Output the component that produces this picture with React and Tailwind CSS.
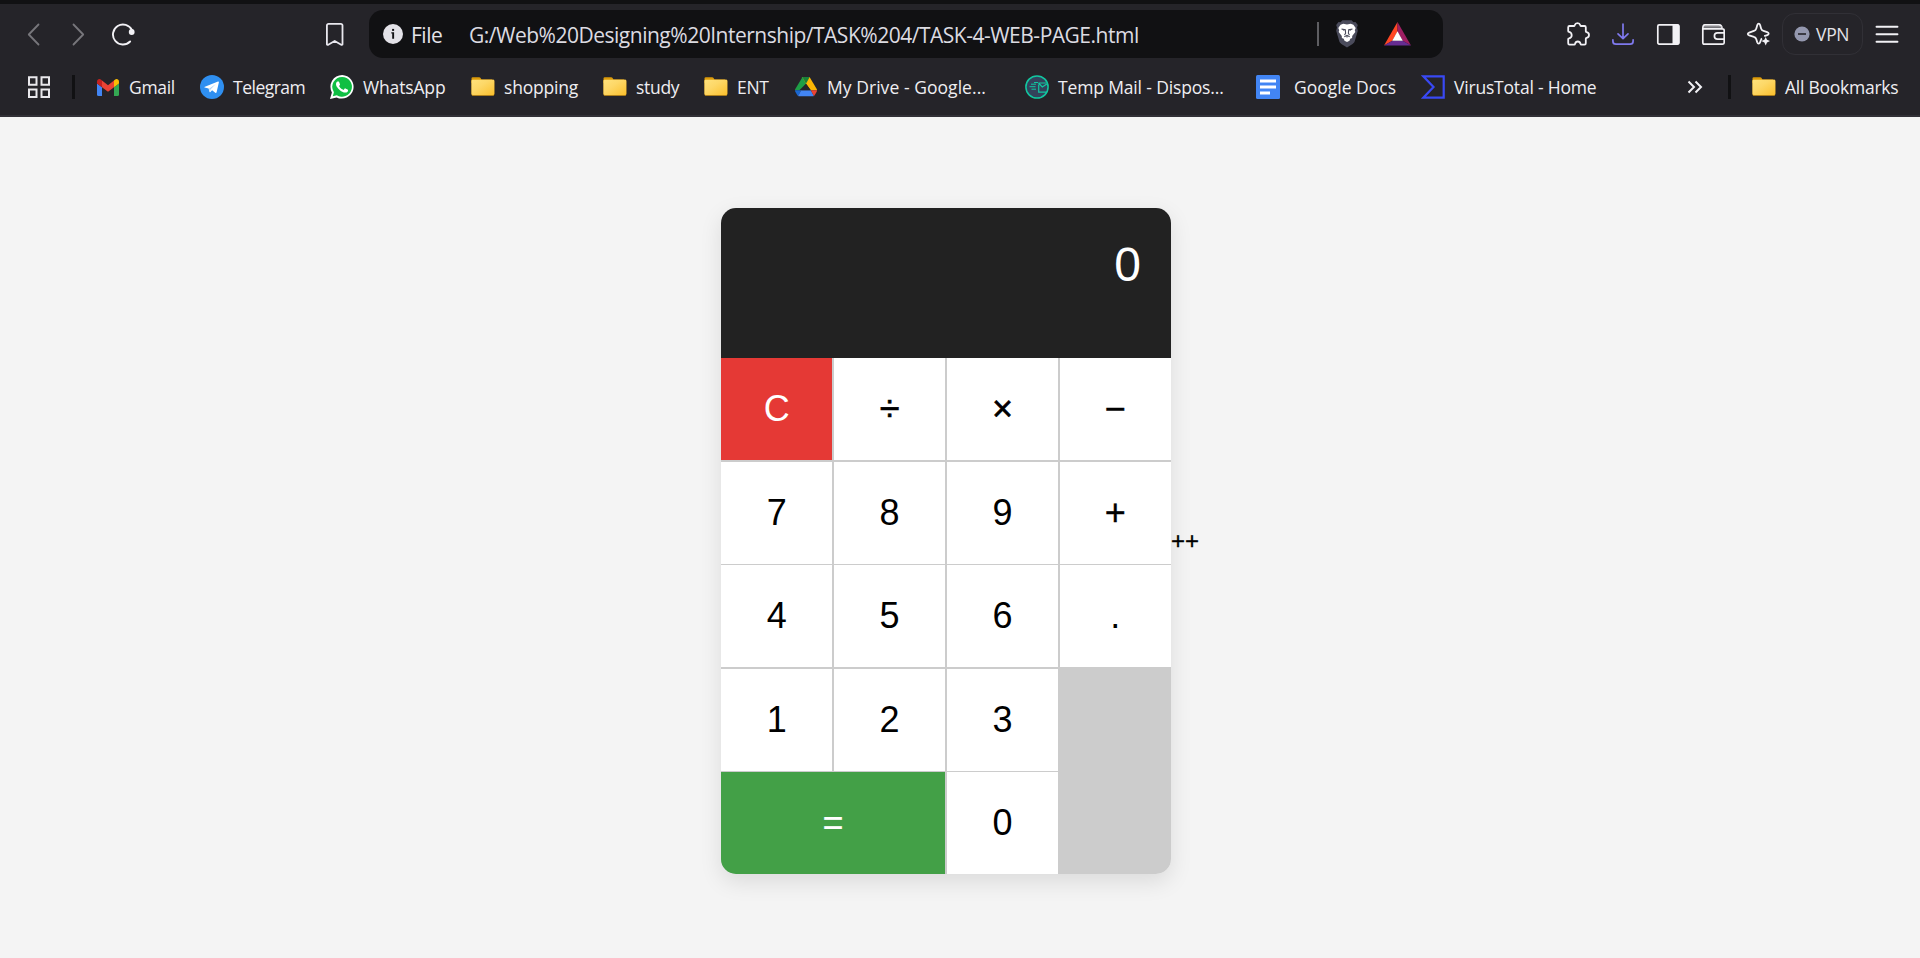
import React from "react";

const uiFont = "font-['Open_Sans','Noto_Sans',sans-serif]";

function Back() {
  return (
    <svg className="h-6 w-6" viewBox="0 0 24 24" fill="none" stroke="#77767b" strokeWidth="1.8" strokeLinecap="round" strokeLinejoin="round">
      <path d="M16.5 2.5 6.8 12.5l9.7 10" />
    </svg>
  );
}
function Forward() {
  return (
    <svg className="h-6 w-6" viewBox="0 0 24 24" fill="none" stroke="#77767b" strokeWidth="1.8" strokeLinecap="round" strokeLinejoin="round">
      <path d="M6.500 2.500 16.200 12.500l-9.700 10" />
    </svg>
  );
}
function Reload() {
  return (
    <svg className="h-6 w-6" viewBox="0 0 24 24" fill="none" stroke="#f2f1f5" strokeWidth="1.9" strokeLinecap="round">
      <path d="M18.100 19.500A10 10 0 1 1 20 8.200" />
      <circle cx="19.700" cy="10" r="2.900" fill="#f2f1f5" stroke="none" />
    </svg>
  );
}
function BookmarkIcon() {
  return (
    <svg className="h-6 w-6" viewBox="0 0 24 24" fill="none" stroke="#e9e8ee" strokeWidth="1.8" strokeLinejoin="round">
      <path d="M4.500 1.900h12.400a1.600 1.600 0 0 1 1.600 1.600v18.600a.8.8 0 0 1-1.300.6L10.700 19l-6.500 3.700a.8.8 0 0 1-1.300-.6V3.500a1.600 1.600 0 0 1 1.600-1.600z" />
    </svg>
  );
}
function Info() {
  return (
    <svg className="h-5 w-5" viewBox="0 0 20 20">
      <circle cx="10" cy="10" r="10" fill="#e3e2e8" />
      <rect x="9.1" y="4.9" width="2" height="2" fill="#111113" />
      <path d="M8.3 8.2h2.8v6.6H9.2V9.6h-.9z" fill="#111113" />
    </svg>
  );
}
function Shield() {
  return (
    <svg className="h-7 w-6" viewBox="0 0 24 28">
      <path d="M7.5.3h9l2 2 2-.2 2.3 3-.8 2.4.8 3.2-3 10.4c-.4 1.4-1.2 2.2-2.2 2.9L12 27.6 6.4 24c-1-.7-1.8-1.5-2.2-2.9l-3-10.4L2 7.500 1.200 5.100l2.300-3 2 .2z" fill="#4a4b5b" />
      <path d="M8.300 3.700 12 4.500l3.700-.8 2.700 1 2.300 3.300-.9 2.300.5 1.800-3.100 4-.1 2-1.800.7-.8 2L12 22.100l-2.500-1.300-.8-2-1.800-.7-.1-2-3.100-4 .5-1.800-.9-2.300 2.300-3.300z" fill="#fff" />
      <path d="m6.500 9 3.800.7.300 3.600-1.100 1.700M17.500 9l-3.800.7-.3 3.600 1.100 1.700M9.300 16.800l2.700-1.500 2.700 1.500M12 15.500v2" fill="none" stroke="#4a4b5b" strokeWidth="1.100" />
      <path d="m6.700 9.200 3 .4-.6 1.300zM17.300 9.200l-3 .4.600 1.300z" fill="#4a4b5b" />
    </svg>
  );
}
function Bat() {
  return (
    <svg className="h-6 w-[27px]" viewBox="0 0 27 24">
      <path d="M13.500 0v9.500L8.300 18.800 0 23.600z" fill="#ff4724" />
      <path d="M13.500 0 27 23.600l-8.300-4.800L13.500 9.500z" fill="#9e1f63" />
      <path d="M0 23.600h27l-8.300-4.900H8.300z" fill="#662d91" />
      <path d="m13.500 9.300 5.300 9.500H8.200z" fill="#fff" />
    </svg>
  );
}
function PuzzleIcon() {
  return (
    <svg className="h-6 w-6" viewBox="0 0 24 24" fill="none" stroke="#f2f1f5" strokeWidth="1.800" strokeLinejoin="round">
      <path d="M3.500 4h4.300c.5 0 .8-.3.900-.8C9.100 1.900 10.100 1.200 11.500 1.200s2.400.7 2.800 2c.1.500.4.800.9.800h3.300c.8 0 1.300.5 1.300 1.300v4c0 .5.300.8.800.9 1.500.3 2.400 1.400 2.400 2.800s-.9 2.500-2.400 2.800c-.5.100-.8.400-.8.900v4.600c0 .8-.5 1.300-1.300 1.300h-3.100c-.5 0-.8-.3-.9-.8-.3-1.400-1.300-2.300-2.700-2.300s-2.400.9-2.700 2.300c-.1.500-.4.800-.9.800H3.500c-.8 0-1.300-.5-1.300-1.300v-4c0-.5.300-.8.800-.9 1.700-.4 2.700-1.500 2.700-3.100S4.700 10.300 3 9.900c-.5-.1-.8-.4-.8-.9V5.300C2.200 4.500 2.700 4 3.500 4z" />
    </svg>
  );
}
function DownloadIcon() {
  return (
    <svg className="h-6 w-6" viewBox="0 0 24 24" fill="none" stroke="#7f79ee" strokeWidth="1.700" strokeLinecap="round" strokeLinejoin="round">
      <path d="M12 2v14.500M7 11.800l5 4.900 5-4.900M1.900 17.800v1.400c0 2 1 3 3 3h14.200c2 0 3-1 3-3v-1.400" />
    </svg>
  );
}
function Panel() {
  return (
    <svg className="h-6 w-6" viewBox="0 0 24 24">
      <rect x="1.800" y="2.900" width="21" height="19.200" rx="1.300" fill="none" stroke="#f2f1f5" strokeWidth="1.700" />
      <path d="M16.500 2.500h5.500a1.500 1.500 0 0 1 1.500 1.500v17a1.500 1.500 0 0 1-1.500 1.500h-5.500z" fill="#f2f1f5" />
    </svg>
  );
}
function WalletIcon() {
  return (
    <svg className="h-6 w-6" viewBox="0 0 24 24" fill="none" stroke="#f2f1f5" strokeWidth="1.700" strokeLinejoin="round">
      <path d="M1.800 6.800v13.600c0 1 .7 1.700 1.700 1.700h18c1 0 1.700-.7 1.700-1.700V8.500c0-1-.7-1.700-1.700-1.700H1.800c0 0 0-3.900 1.900-3.900h14.600c1.600 0 2.600 1.500 2.700 3.700" />
      <path d="M3 4.900h17.500" strokeWidth="1.400" stroke="#a9a8ad" />
      <path d="M23 10.800h-6.500c-1.900 0-3.100 1.300-3.100 3.200s1.200 3.200 3.100 3.200H23" />
    </svg>
  );
}
function Spark() {
  return (
    <svg className="h-6 w-6" viewBox="0 0 24 24" fill="none" stroke="#f2f1f5" strokeWidth="1.800" strokeLinejoin="round">
      <path d="M16 16.500c-.5.300-.9.800-1.100 1.500l-.8 2.300c-.6 1.800-2.300 1.800-2.900 0l-.9-3c-.4-1.300-1.100-2-2.400-2.400l-4.700-1.600c-1.900-.7-1.900-2 0-2.700l4.700-1.700c1.300-.4 2-1.100 2.400-2.400l1-3.400c.6-1.900 2.200-1.900 2.800 0l1 3.400c.4 1.300 1.100 2 2.400 2.400l3.700 1.300c1.900.7 2 2.200.1 2.900l-3.100 1.100" />
      <path d="m19.700 15 1.300 2.800 3 1.300-3 1.300-1.300 3-1.300-3-3-1.300 3-1.300z" fill="#f2f1f5" stroke="none" />
    </svg>
  );
}
function MenuIcon() {
  return (
    <svg className="h-6 w-6" viewBox="0 0 24 24" stroke="#f2f1f5" strokeWidth="1.900" strokeLinecap="round">
      <path d="M1.500 4.800h21M1.500 12.300h21M1.500 19.800h21" />
    </svg>
  );
}
function Apps() {
  return (
    <svg className="h-6 w-6" viewBox="0 0 24 24" fill="none" stroke="#e9e8ec" strokeWidth="2">
      <path d="M2 2.200h7.500v7.500H2zM14.500 2.200H22v7.500h-7.500zM2 14.500h7.500V22H2zM14.500 14.500H22V22h-7.500z" />
    </svg>
  );
}
function Gmail() {
  return (
    <svg className="h-[17px] w-[22px]" viewBox="0 0 22 17">
      <path d="M0 4.500 5 8.300V17H1.500A1.500 1.500 0 0 1 0 15.500z" fill="#4285f4" />
      <path d="M22 4.500 17 8.300V17h3.500a1.500 1.500 0 0 0 1.500-1.500z" fill="#34a853" />
      <path d="M17 1.600v6.700l5-3.800V2.600C22 .3 19.500-.7 17.800.8z" fill="#fbbc04" />
      <path d="M5 8.300V1.600l6 4.600 6-4.600v6.700l-6 4.500z" fill="#ea4335" />
      <path d="M0 2.600v1.900l5 3.800V1.600L4.200.8C2.500-.7 0 .3 0 2.600z" fill="#c5221f" />
    </svg>
  );
}
function Telegram() {
  return (
    <svg className="h-6 w-6" viewBox="0 0 24 24">
      <circle cx="12" cy="12" r="12" fill="#2f8ff0" />
      <path d="M4.300 12 18 6.500c.6-.2 1 .1.900.8l-2.300 9.900c-.2.700-.7.900-1.300.5l-3.200-2.500-1.700 1.700c-.5.400-.9.300-1-.3l-.8-3-3.900-1.200c-.6-.1-.6-.200-.4-.4z" fill="#fff" />
      <path d="m9 13.800 6.800-4.900-5.300 5.600-.5 2.300z" fill="#b5d5f5" />
    </svg>
  );
}
function WhatsApp() {
  return (
    <svg className="h-6 w-6" viewBox="0 0 24 24">
      <path d="M12.200 0A11.800 11.800 0 0 0 1.900 17.500L0 24l6.600-1.600A11.800 11.800 0 1 0 12.200 0z" fill="#fff" />
      <path d="M12.200 1.900A9.900 9.900 0 0 0 3.900 17.200L2.800 21.200l4-1A9.900 9.900 0 1 0 12.200 1.900z" fill="#0fbf43" />
      <path d="M17.472 14.382c-.297-.149-1.758-.867-2.030-.967-.273-.099-.471-.148-.670.150-.197.297-.767.966-.940 1.164-.173.199-.347.223-.644.075-.297-.150-1.255-.463-2.390-1.475-.883-.788-1.480-1.761-1.653-2.059-.173-.297-.018-.458.130-.606.134-.133.298-.347.446-.520.149-.174.198-.298.298-.497.099-.198.050-.371-.025-.520-.075-.149-.669-1.612-.916-2.207-.242-.579-.487-.500-.669-.510-.173-.008-.371-.010-.570-.010-.198 0-.520.074-.792.372-.272.297-1.040 1.016-1.040 2.479 0 1.462 1.065 2.875 1.213 3.074.149.198 2.096 3.200 5.077 4.487.709.306 1.262.489 1.694.625.712.227 1.360.195 1.871.118.571-.085 1.758-.719 2.006-1.413.248-.694.248-1.289.173-1.413-.074-.124-.272-.198-.570-.347" fill="#fff" />
    </svg>
  );
}
function Folder() {
  return (
    <svg className="h-6 w-6" viewBox="0 0 24 24">
      <defs>
        <linearGradient id="folderFace" x1="0" y1="0" x2="1" y2="1">
          <stop offset="0" stopColor="#ffe27c" />
          <stop offset="0.400" stopColor="#fdd868" />
          <stop offset="1" stopColor="#fbc02d" />
        </linearGradient>
      </defs>
      <path d="M.5 3.500A1.300 1.300 0 0 1 1.800 2.200h6.400c.5 0 .9.200 1.200.6L10.500 4.500H21V8H.5z" fill="#dc9b09" />
      <path d="M.5 6c0-.8.500-1.200 1.200-1.200h20.400c.7 0 1.200.4 1.200 1.200v13.200c0 .8-.5 1.600-1.300 1.600H1.800c-.8 0-1.300-.8-1.300-1.600z" fill="#d99c17" />
      <path d="M.5 6c0-.8.500-1.200 1.200-1.200h20.400c.7 0 1.200.4 1.200 1.200v12.600c0 .8-.5 1.400-1.300 1.400H1.800c-.8 0-1.300-.6-1.300-1.400z" fill="url(#folderFace)" />
    </svg>
  );
}
function Drive() {
  return (
    <svg className="h-5 w-[22px]" viewBox="0 0 22 20">
      <path d="M7.400.3C7.600.1 7.800 0 8 0h3L11 6.700 4.300 13.200H0c0-.4.100-.8.300-1.200z" fill="#1e9e46" />
      <path d="M11 0h3c.300 0 .5.100.7.300L21.700 12c.2.400.3.800.3 1.200h-6.200L11 6.700 7.400.3z" fill="#fbb604" />
      <path d="M7.400.3C7.600.1 7.800 0 8 0h6c.300 0 .5.100.6.200L11 6.700z" fill="#188038" />
      <path d="M0 13.200h6.200L3.100 19c-.4-.2-.7-.5-.9-.9L.3 14.700c-.2-.5-.3-1-.3-1.500z" fill="#1967d2" />
      <path d="M6.200 13.200h9.600l3.100 5.800c-.4.200-.8.300-1.200.3H4.300c-.4 0-.8-.1-1.200-.3z" fill="#4285f4" />
      <path d="M22 13.200h-6.200l3.100 5.800c.4-.2.700-.5.900-.9l1.900-3.400c.2-.5.300-1 .3-1.500z" fill="#ea4335" />
      <path d="m11 6.700 4.800 6.500H6.200z" fill="#252429" />
    </svg>
  );
}
function TempMail() {
  return (
    <svg className="h-6 w-6" viewBox="0 0 24 24" fill="none" stroke="#12c7a0">
      <circle cx="12" cy="12" r="11.100" fill="#33425b" strokeWidth="1.500" />
      <path d="M6 9.200h5M4.500 11.700h6M6.500 14.200h4.500" strokeWidth="1" />
      <path d="M9 7.500h4M13.500 8h8M13.700 9.500v7.700h8M13.500 8l3.800 4 4.500-3" strokeWidth="1.200" />
    </svg>
  );
}
function Docs() {
  return (
    <svg className="h-6 w-6" viewBox="0 0 24 24">
      <rect width="24" height="24" rx="1.500" fill="#4285f4" />
      <path d="M4 4.500h16v3H4zM4 10.500h16v3H4zM4 16.500h10v3H4z" fill="#fff" />
    </svg>
  );
}
function VirusTotal() {
  return (
    <svg className="h-6 w-6" viewBox="0 0 24 24" fill="none" stroke="#3949f5" strokeWidth="2.200">
      <path d="M2.300 1.300h20.400v21.400H2.300L12.500 12z" />
    </svg>
  );
}
function More() {
  return (
    <svg className="h-6 w-6" viewBox="0 0 24 24" fill="none" stroke="#f2f1f5" strokeWidth="2">
      <path d="m5.500 6.500 5.500 5.500-5.500 5.500M12.500 6.500 18 12l-5.500 5.500" />
    </svg>
  );
}

const bookmarks = [
  { label: "Gmail", Icon: Gmail, slot: "w-[103px]", gap: "ml-2.5", track: "tracking-[-0.3px]" },
  { label: "Telegram", Icon: Telegram, slot: "w-[130px]", gap: "ml-[9px]", track: "tracking-[-0.5px]" },
  { label: "WhatsApp", Icon: WhatsApp, slot: "w-[141px]", gap: "ml-[9px]", track: "tracking-[-0.15px]" },
  { label: "shopping", Icon: Folder, slot: "w-[132px]", gap: "ml-[9px]", track: "tracking-[-0.2px]" },
  { label: "study", Icon: Folder, slot: "w-[101px]", gap: "ml-[9px]", track: "tracking-[-0.3px]" },
  { label: "ENT", Icon: Folder, slot: "w-[91px]", gap: "ml-[9px]", track: "tracking-[-0.3px]" },
  { label: "My Drive - Google...", Icon: Drive, slot: "w-[230px]", gap: "ml-2.5", track: "tracking-[0.05px]" },
  { label: "Temp Mail - Dispos...", Icon: TempMail, slot: "w-[231px]", gap: "ml-[9px]", track: "tracking-[-0.15px]" },
  { label: "Google Docs", Icon: Docs, slot: "w-[165px]", gap: "ml-[14px]", track: "tracking-normal" },
  { label: "VirusTotal - Home", Icon: VirusTotal, slot: "w-[262px]", gap: "ml-[9px]", track: "tracking-[-0.2px]" },
];

function Toolbar() {
  return (
    <div className="flex h-12 items-center pl-[22px] pr-5">
      <div className="flex w-[302px] items-center gap-[21px]">
        <Back />
        <Forward />
        <Reload />
      </div>
      <BookmarkIcon />
      <div className="ml-[21px] flex h-12 w-[1074px] items-center rounded-[14px] bg-[#111113] pl-3.5">
        <Info />
        <span className="ml-2 w-[58px] pt-0.5 text-[21px] leading-7 tracking-[-0.5px] text-[#e3e2e8]">File</span>
        <span className="w-[848px] pt-0.5 text-[21px] leading-7 tracking-[-0.49px] text-[#dcdbe1]">
          G:/Web%20Designing%20Internship/TASK%204/TASK-4-WEB-PAGE.html
        </span>
        <span className="h-6 w-0.5 bg-[#5e5e62]" />
        <span className="ml-4"><Shield /></span>
        <span className="ml-[25px]"><Bat /></span>
      </div>
      <div className="ml-[123px] flex items-center gap-[21px]">
        <PuzzleIcon />
        <DownloadIcon />
        <Panel />
        <WalletIcon />
        <Spark />
      </div>
      <div className="ml-3 flex h-[42px] w-[81px] items-center rounded-[13px] border border-[#313036] pl-[11px]">
        <svg className="h-4 w-4" viewBox="0 0 16 16">
          <circle cx="8" cy="8" r="7.600" fill="#9498af" />
          <path d="M4 8h8" stroke="#252429" strokeWidth="1.600" />
        </svg>
        <span className="ml-1.5 text-[17.5px] tracking-[-0.3px] text-[#e3e2e8]">VPN</span>
      </div>
      <div className="ml-3"><MenuIcon /></div>
    </div>
  );
}

function BookmarksBar() {
  return (
    <div className="mt-[5px] flex h-12 items-center pl-[27px] text-[17.5px] text-[#efeef2]">
      <Apps />
      <span className="ml-[21px] mr-[22px] h-6 w-[3px] bg-[#111113]" />
      {bookmarks.map(({ label, Icon, slot, gap, track }) => (
        <div key={label} className={`flex shrink-0 items-center whitespace-nowrap ${slot}`}>
          <Icon />
          <span className={`${gap} ${track}`}>{label}</span>
        </div>
      ))}
      <More />
      <span className="ml-[21px] mr-[21px] h-6 w-[3px] bg-[#111113]" />
      <Folder />
      <span className="ml-[9px] whitespace-nowrap tracking-[-0.25px]">All Bookmarks</span>
    </div>
  );
}

const keys = [
  ["C", "bg-[#e53935] text-white"],
  ["÷", "bg-white [-webkit-text-stroke:0.6px_black]"],
  ["×", "bg-white [-webkit-text-stroke:0.6px_black]"],
  ["−", "bg-white [-webkit-text-stroke:0.5px_black]"],
  ["7", "bg-white"],
  ["8", "bg-white"],
  ["9", "bg-white"],
  ["+", "bg-white [-webkit-text-stroke:0.4px_black]"],
  ["4", "bg-white"],
  ["5", "bg-white"],
  ["6", "bg-white"],
  [".", "bg-white"],
  ["1", "bg-white"],
  ["2", "bg-white"],
  ["3", "bg-white"],
  ["=", "col-span-2 col-start-1 bg-[#43a047] text-white [-webkit-text-stroke:0.2px_white]"],
  ["0", "bg-white"],
];

function Calculator() {
  return (
    <div className="w-[450px] overflow-hidden rounded-[15px] bg-white shadow-[0_7.5px_22.5px_rgba(0,0,0,0.1)]">
      <div className="h-[150px] bg-[#222222] px-[30px] pt-[29px] text-right text-[48px] leading-[55px] text-white">0</div>
      <div className="grid grid-cols-4 gap-[1.5px] bg-[#cccccc]">
        {keys.map(([k, style]) => (
          <button key={k} className={`h-[102px] text-[36px] ${style}`}>{k}</button>
        ))}
      </div>
    </div>
  );
}

export default function App() {
  return (
    <div className="flex h-[958px] w-[1920px] flex-col overflow-hidden bg-[#f4f4f4]">
      <header className={`h-[117px] shrink-0 border-b-2 border-t-4 border-b-[#313036] border-t-[#111113] bg-[#252429] pt-1.5 ${uiFont}`}>
        <Toolbar />
        <BookmarksBar />
      </header>
      <main className="flex items-center justify-center pt-[91px] font-['Liberation_Sans',Arial,sans-serif] text-black">
        <Calculator />
        <span className="text-2xl [-webkit-text-stroke:0.3px_black]">++</span>
      </main>
    </div>
  );
}
